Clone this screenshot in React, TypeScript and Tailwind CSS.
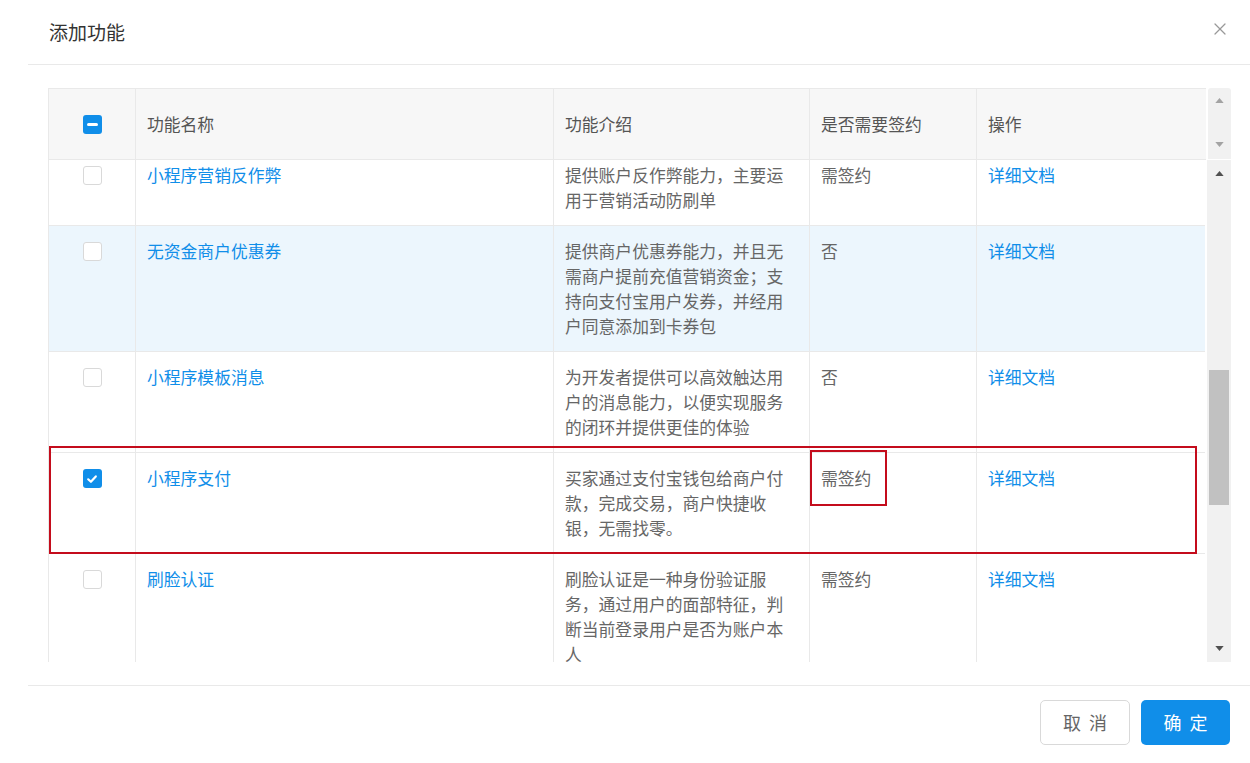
import { X } from 'lucide-react'

const rows = [
  { name: '小程序营销反作弊', desc: '提供账户反作弊能力，主要运用于营销活动防刷单', sign: '需签约' },
  { name: '无资金商户优惠券', desc: '提供商户优惠券能力，并且无需商户提前充值营销资金；支持向支付宝用户发券，并经用户同意添加到卡券包', sign: '否', hover: true },
  { name: '小程序模板消息', desc: '为开发者提供可以高效触达用户的消息能力，以便实现服务的闭环并提供更佳的体验', sign: '否' },
  { name: '小程序支付', desc: '买家通过支付宝钱包给商户付款，完成交易，商户快捷收银，无需找零。', sign: '需签约', checked: true },
  { name: '刷脸认证', desc: '刷脸认证是一种身份验证服务，通过用户的面部特征，判断当前登录用户是否为账户本人', sign: '需签约' },
]

function Cols() {
  return (
    <colgroup>
      <col className="w-[87px]" />
      <col className="w-[418px]" />
      <col className="w-[256px]" />
      <col className="w-[167px]" />
      <col className="w-[229px]" />
    </colgroup>
  )
}

function Box({ checked }: { checked?: boolean }) {
  if (checked)
    return (
      <span className="grid size-[19px] place-items-center rounded-[3px] bg-[#108ee9]">
        <svg viewBox="0 0 12 12" className="size-[12px]">
          <path d="M2.2 6.3 4.9 8.8 9.8 3.4" fill="none" stroke="white" strokeWidth="2.2" strokeLinecap="round" strokeLinejoin="round" />
        </svg>
      </span>
    )
  return <span className="block size-[19px] rounded-[3px] border border-[#d9d9d9] bg-white" />
}

function Arrow({ up, color }: { up?: boolean; color: string }) {
  return (
    <svg viewBox="0 0 10 6" className="h-[5px] w-[9px]" style={{ fill: color }}>
      {up ? <path d="M5 0 10 6H0z" /> : <path d="M0 0h10L5 6z" />}
    </svg>
  )
}

export default function App() {
  return (
    <div className="relative h-[763px] w-[1250px] overflow-hidden bg-white font-['Noto_Sans_CJK_SC',sans-serif] text-[#666]">
      <div className="ml-[28px]">
        <div className="flex h-[65px] items-center justify-between border-b border-[#e9e9e9] pl-[21px] pr-[20px]">
          <h2 className="text-[19px] text-[#333]">添加功能</h2>
          <X className="-mt-[6px] size-[20px] text-[#999]" strokeWidth={1.5} />
        </div>

        <div className="pb-[23px] pl-[20px] pr-[19px] pt-[23px]">
          {/* header */}
          <div className="flex gap-[2px]">
            <table className="w-[1157px] table-fixed border-collapse bg-[#f7f7f7] text-[16.8px] leading-[25px] text-[#555]">
              <Cols />
              <thead>
                <tr className="h-[71px] border-b border-t border-[#e9e9e9]">
                  <th className="border-l border-r border-[#e9e9e9] font-normal">
                    <span className="mx-auto grid size-[19px] place-items-center rounded-[3px] bg-[#108ee9]">
                      <span className="h-[3px] w-[11px] rounded-full bg-white" />
                    </span>
                  </th>
                  <th className="border-r border-[#e9e9e9] px-[11px] text-left font-normal">功能名称</th>
                  <th className="border-r border-[#e9e9e9] px-[11px] text-left font-normal">功能介绍</th>
                  <th className="border-r border-[#e9e9e9] px-[11px] text-left font-normal">是否需要签约</th>
                  <th className="px-[11px] text-left font-normal">操作</th>
                </tr>
              </thead>
            </table>
            <div className="flex h-[71px] w-[24px] flex-col items-center justify-between rounded-t-[3px] bg-[#f1f1f1] pb-[12px] pt-[10px]">
              <Arrow up color="#a3a3a3" />
              <Arrow color="#a3a3a3" />
            </div>
          </div>

          {/* body */}
          <div className="flex h-[502px] gap-[2px]">
            <div className="h-[502px] w-[1157px] overflow-hidden">
              <table className="-mt-[10px] w-[1157px] table-fixed border-collapse text-[16.8px] leading-[25px]">
                <Cols />
                <tbody>
                  {rows.map((r) => (
                    <tr key={r.name} className={`border-b border-[#e9e9e9] align-top ${r.hover ? 'bg-[#ecf6fd]' : 'bg-white'}`}>
                      <td className="border-l border-r border-[#e9e9e9] pb-[12px] pt-[13px]">
                        <div className="flex h-[25px] items-center justify-center">
                          <Box checked={r.checked} />
                        </div>
                      </td>
                      <td className="border-r border-[#e9e9e9] px-[11px] pb-[12px] pt-[13px] text-[#108ee9]">{r.name}</td>
                      <td className="border-r border-[#e9e9e9] px-[11px] pb-[12px] pt-[13px]">{r.desc}</td>
                      <td className="border-r border-[#e9e9e9] px-[11px] pb-[12px] pt-[13px]">{r.sign}</td>
                      <td className="px-[11px] pb-[12px] pt-[13px] text-[#108ee9]">详细文档</td>
                    </tr>
                  ))}
                </tbody>
              </table>
            </div>
            <div className="flex w-[24px] flex-col items-center bg-[#f1f1f1]">
              <div className="flex h-[26px] items-center">
                <Arrow up color="#505050" />
              </div>
              <div className="h-[184px]" />
              <div className="h-[135px] w-[20px] bg-[#c1c1c1]" />
              <div className="flex-1" />
              <div className="flex h-[28px] items-center">
                <Arrow color="#505050" />
              </div>
            </div>
          </div>
        </div>

        <div className="flex justify-end gap-[11px] border-t border-[#e9e9e9] pr-[20px] pt-[14px]">
          <button className="h-[45px] w-[90px] rounded-[5px] border border-[#d9d9d9] bg-white pl-[2px] text-[18px] tracking-[2px] text-[#666]">取 消</button>
          <button className="h-[45px] w-[89px] rounded-[5px] bg-[#108ee9] pl-[2px] text-[18px] tracking-[2px] text-white">确 定</button>
        </div>
      </div>

      {/* annotation boxes */}
      <div className="pointer-events-none absolute left-[49px] top-[446px] h-[108px] w-[1148px] border-2 border-[#c40c1c]" />
      <div className="pointer-events-none absolute left-[810px] top-[450px] h-[56px] w-[77px] border-2 border-[#c40c1c]" />
    </div>
  )
}
